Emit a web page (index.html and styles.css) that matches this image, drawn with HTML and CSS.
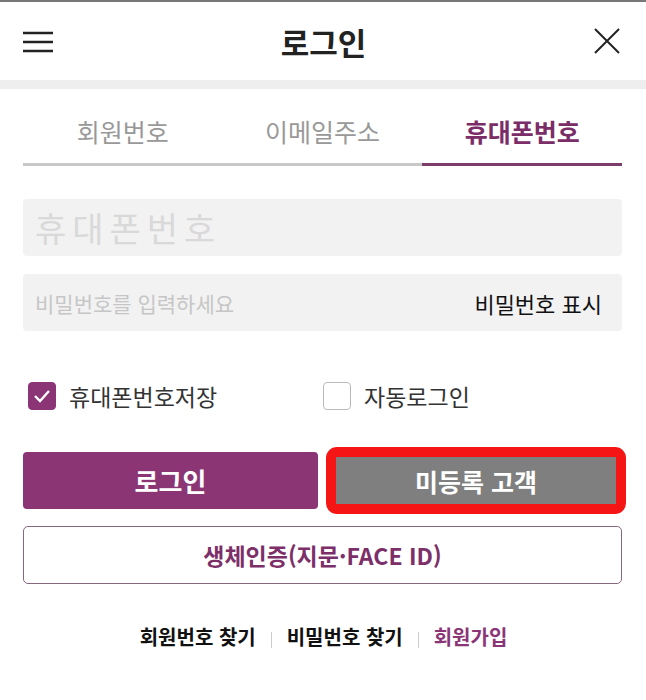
FILE: index.html
```html
<!DOCTYPE html>
<html lang="ko">
<head>
    <meta charset="UTF-8">
    <meta name="viewport" content="width=device-width, initial-scale=1.0">
    <title>로그인</title>
    <link rel="stylesheet" href="styles.css">
</head>
<body>

<div class="header">
    <svg class="menu-icon" width="32" height="24" viewBox="0 0 32 24">
        <path d="M1 3H31M1 12H31M1 21H31" stroke="#222" stroke-width="2.4" fill="none"/>
    </svg>
    <h1 class="title">로그인</h1>
    <svg class="close-icon" width="28" height="28" viewBox="0 0 28 28">
        <path d="M2 2L26 26M26 2L2 26" stroke="#222" stroke-width="2" fill="none"/>
    </svg>
</div>
<div class="divider"></div>

<div class="content">
    <div class="tabs">
        <div class="tab">회원번호</div>
        <div class="tab">이메일주소</div>
        <div class="tab active">휴대폰번호</div>
    </div>

    <div class="field">
        <input type="text" class="phone-input" placeholder="휴대폰번호">
    </div>
    <div class="field password">
        <input type="password" class="pw-input" placeholder="비밀번호를 입력하세요">
        <span class="show-pw">비밀번호 표시</span>
    </div>

    <div class="checks">
        <label class="check">
            <span class="box checked">
                <svg width="18" height="14" viewBox="0 0 18 14"><path d="M2 7L7 12L16 2" stroke="#fff" stroke-width="2.4" fill="none"/></svg>
            </span>
            휴대폰번호저장
        </label>
        <label class="check">
            <span class="box"></span>
            자동로그인
        </label>
    </div>

    <div class="buttons">
        <button class="btn-login">로그인</button>
        <div class="guest-wrap">
            <button class="btn-guest">미등록 고객</button>
        </div>
    </div>

    <button class="btn-bio">생체인증(지문·FACE ID)</button>

    <div class="links">
        <a>회원번호 찾기</a>
        <span class="sep"></span>
        <a>비밀번호 찾기</a>
        <span class="sep"></span>
        <a class="join">회원가입</a>
    </div>
</div>

</body>
</html>
```

FILE: styles.css
```css
body {
    margin: 0;
    font-family: "Noto Sans CJK KR", "Noto Sans", sans-serif;
    background: #fff;
    border-top: 2px solid #777;
}
.header {
    height: 78px;
    display: flex;
    align-items: center;
    justify-content: space-between;
    padding: 0 25px 0 22px;
}
.menu-icon {
    margin-top: 2px;
}
.title {
    margin: 0;
    font-size: 31px;
    font-weight: bold;
    color: #222;
}
.divider {
    height: 9px;
    background: #eeeeee;
}
.content {
    padding: 0 24px 0 23px;
}
.tabs {
    display: flex;
    margin-top: 19px;
    border-bottom: 3px solid #c8c8c8;
}
.tab {
    flex: 1;
    text-align: center;
    font-size: 25px;
    color: #999;
    height: 55px;
    line-height: 46px;
}
.tab.active {
    color: #7b2d68;
    font-weight: bold;
    border-bottom: 3px solid #7b3d6c;
    margin-bottom: -3px;
}
.field {
    background: #f2f2f2;
    border-radius: 4px;
    height: 57px;
    display: flex;
    align-items: center;
    margin-top: 33px;
    padding: 0 20px 0 12px;
}
.field.password {
    margin-top: 18px;
}
.field input {
    flex: 1;
    border: none;
    background: transparent;
    outline: none;
    font-family: inherit;
    padding: 0;
}
.phone-input {
    font-size: 34px;
    letter-spacing: 6px;
}
.phone-input::placeholder {
    color: #d9d9d9;
}
.pw-input {
    font-size: 21px;
}
.pw-input::placeholder {
    color: #c6c6c6;
}
.show-pw {
    font-size: 22px;
    color: #111;
}
.checks {
    display: flex;
    margin-top: 48px;
    padding-left: 5px;
}
.check {
    display: flex;
    align-items: center;
    font-size: 23px;
    color: #333;
    width: 295px;
}
.box {
    width: 28px;
    height: 28px;
    border: 1px solid #bbb;
    border-radius: 4px;
    box-sizing: border-box;
    margin-right: 13px;
    display: flex;
    align-items: center;
    justify-content: center;
}
.box.checked {
    background: #8b3576;
    border-color: #8b3576;
}
.buttons {
    display: flex;
    align-items: center;
    margin-top: 34px;
    gap: 8px;
}
button {
    font-family: inherit;
    cursor: pointer;
}
.btn-login {
    width: 295px;
    height: 57px;
    border: none;
    border-radius: 4px;
    background: #8b3575;
    color: #fff;
    font-size: 26px;
    font-weight: bold;
}
.guest-wrap {
    flex: 1;
    border: 10px solid #f51515;
    border-radius: 11px;
    margin-right: -4px;
}
.btn-guest {
    display: block;
    width: 100%;
    height: 47px;
    border: none;
    background: #7f7f7f;
    color: #fff;
    font-size: 25px;
    font-weight: bold;
}
.btn-bio {
    display: block;
    width: 100%;
    height: 58px;
    margin-top: 12px;
    border: 1.5px solid #876780;
    border-radius: 5px;
    background: #fff;
    color: #7d2f69;
    font-size: 23px;
    font-weight: bold;
}
.links {
    display: flex;
    justify-content: center;
    align-items: center;
    margin-top: 38px;
    gap: 15px;
    padding-left: 2px;
}
.links a {
    font-size: 20px;
    font-weight: bold;
    color: #111;
}
.links a.join {
    color: #8b3576;
}
.sep {
    width: 1px;
    height: 16px;
    background: #ccc;
    margin-top: 6px;
}
```
